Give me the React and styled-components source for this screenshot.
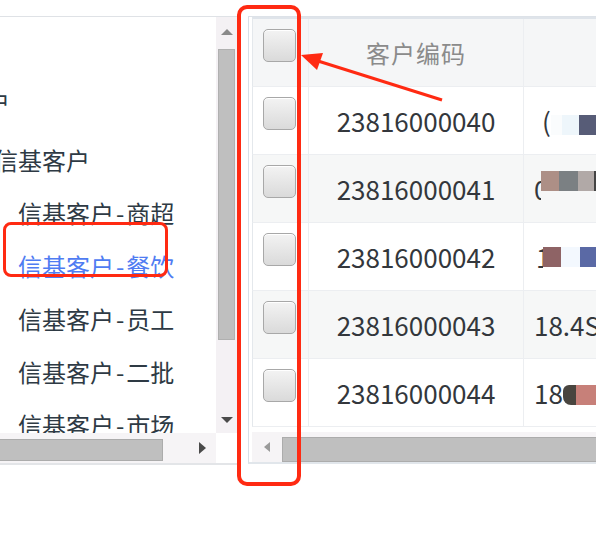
import React from 'react'
import styled, { createGlobalStyle } from 'styled-components'

const GlobalStyle = createGlobalStyle`
  html, body {
    margin: 0;
    background: #fff;
    overflow: hidden;
  }
  body {
    font-family: "Noto Sans CJK SC", "Noto Sans", sans-serif;
  }
`

const tree = [
  { label: '客户', indent: -38, tall: true },
  { label: '信基客户', indent: -6 },
  { label: '信基客户-商超', indent: 18 },
  { label: '信基客户-餐饮', indent: 18, active: true },
  { label: '信基客户-员工', indent: 18 },
  { label: '信基客户-二批', indent: 18 },
  { label: '信基客户-市场', indent: 18 },
]

const rows = [
  { code: '23816000040', text: '(', pad: 8, blocks: [{ w: 11, c: '#fafcfd', dy: 4 }, { w: 17, c: '#eef6fb', dy: 4 }, { w: 19, c: '#575c77', dy: 4 }] },
  { code: '23816000041', text: '0', pad: 0, clip: true, blocks: [{ w: 18, c: '#ad8f86', dy: -8 }, { w: 19, c: '#7b8083', dy: -8 }, { w: 16, c: '#b1a9a7', dy: -8 }, { w: 8, c: '#444', dy: -8 }] },
  { code: '23816000042', text: '1', pad: 2, clip: true, blocks: [{ w: 18, c: '#8e6365', dy: 0 }, { w: 19, c: '#f3f8fe', dy: 0 }, { w: 19, c: '#5a69a5', dy: 0 }] },
  { code: '23816000043', text: '18.4S', pad: 0, blocks: [] },
  { code: '23816000044', text: '18', pad: 0, blocks: [{ w: 13, c: '#49453f', dy: 2, r: true }, { w: 24, c: '#c78079', dy: 2 }] },
]

const Label = ({ text }) => {
  const parts = text.split('-')
  if (parts.length < 2) return text
  return (
    <>
      {parts[0]}<Dash>-</Dash>{parts[1]}
    </>
  )
}

const App = () => {
  return (
    <>
      <GlobalStyle />
      <Stage>
        <TreePanel>
          <TreeBody>
            <TreeList>
              {tree.map((item, i) => (
                <TreeRow key={i} $indent={item.indent} $tall={item.tall} $active={item.active}>
                  <Label text={item.label} />
                </TreeRow>
              ))}
            </TreeList>
            <VScroll>
              <ArrowBox $h={30}><Tri $dir="up" /></ArrowBox>
              <VThumb />
              <Spacer />
              <ArrowBox $h={26}><Tri $dir="down" /></ArrowBox>
            </VScroll>
          </TreeBody>
          <HScrollRow>
            <HTrack>
              <HThumb $w={163} />
              <Spacer />
              <ArrowBox $w={20}><Tri $dir="right" /></ArrowBox>
            </HTrack>
            <Corner />
          </HScrollRow>
        </TreePanel>

        <TablePanel>
          <HeaderRow>
            <CheckCell><CheckBox /></CheckCell>
            <HeadCell>客户编码</HeadCell>
            <Cell />
          </HeaderRow>
          <TableBody>
            {rows.map((row, i) => (
              <BodyRow key={row.code} $alt={i % 2 === 1}>
                <CheckCell><CheckBox /></CheckCell>
                <CodeCell>{row.code}</CodeCell>
                <NameCell $pad={row.pad}>
                  <NameText $clip={row.clip}>{row.text}</NameText>
                  {row.blocks.map((b, j) => (
                    <Mosaic key={j} $w={b.w} $c={b.c} $dy={b.dy} $r={b.r} />
                  ))}
                </NameCell>
              </BodyRow>
            ))}
          </TableBody>
          <HScrollRow>
            <ArrowBox $w={30}><Tri $dir="left" /></ArrowBox>
            <TableThumb />
          </HScrollRow>
        </TablePanel>

        <Mark $x={3} $y={222} $w={165} $h={55} $r={8} $b={3} />
        <Mark $x={237} $y={5} $w={64} $h={481} $r={10} $b={4} />
        <ArrowSvg width="596" height="544" viewBox="0 0 596 544">
          <line x1="442" y1="100" x2="318" y2="61" stroke="#ff2a12" strokeWidth="3" />
          <polygon points="301,55 323,53 317,70" fill="#ff2a12" />
        </ArrowSvg>
      </Stage>
    </>
  )
}

export default App

const Stage = styled.div`
  position: relative;
  width: 596px;
  height: 544px;
  overflow: hidden;
  padding-top: 16px;
  box-sizing: border-box;
  display: flex;
  align-items: flex-start;
`

const TreePanel = styled.div`
  width: 238px;
  flex: none;
  display: flex;
  flex-direction: column;
  border-top: 1px solid #dfe2e6;
  border-bottom: 2px solid #e3e5e8;
`

const TreeBody = styled.div`
  height: 416px;
  display: flex;
`

const TreeList = styled.div`
  flex: 1;
  overflow: hidden;
  padding-top: 53px;
`

const TreeRow = styled.div`
  height: ${p => (p.$tall ? 63 : 53)}px;
  display: flex;
  align-items: center;
  padding-left: ${p => (p.$indent < 0 ? 0 : p.$indent)}px;
  margin-left: ${p => (p.$indent < 0 ? p.$indent : 0)}px;
  white-space: nowrap;
  font-size: 24px;
  color: ${p => (p.$active ? '#4f7cf2' : '#2e3a44')};
`

const Dash = styled.span`
  margin: 0 2px;
`

const VScroll = styled.div`
  width: 22px;
  background: #f4f1f4;
  display: flex;
  flex-direction: column;
`

const ArrowBox = styled.div`
  flex: none;
  ${p => p.$h && `height: ${p.$h}px;`}
  ${p => p.$w && `width: ${p.$w}px;`}
  display: flex;
  align-items: center;
  justify-content: center;
`

const Tri = styled.div`
  width: 0;
  height: 0;
  ${p => p.$dir === 'up' && 'border-left: 6px solid transparent; border-right: 6px solid transparent; border-bottom: 6px solid #8a8a8a;'}
  ${p => p.$dir === 'down' && 'border-left: 6px solid transparent; border-right: 6px solid transparent; border-top: 6px solid #4a4a4a;'}
  ${p => p.$dir === 'right' && 'border-top: 6px solid transparent; border-bottom: 6px solid transparent; border-left: 7px solid #4a4a4a;'}
  ${p => p.$dir === 'left' && 'border-top: 5px solid transparent; border-bottom: 5px solid transparent; border-right: 6px solid #9a9a9a;'}
`

const VThumb = styled.div`
  width: 17px;
  height: 291px;
  margin: 2px 0 0 2px;
  background: #bfbfbf;
  border: 1px solid #b0b0b0;
  box-sizing: border-box;
`

const Spacer = styled.div`
  flex: 1;
`

const HScrollRow = styled.div`
  height: 30px;
  display: flex;
  background: #f6f4f6;
`

const HTrack = styled.div`
  flex: 1;
  display: flex;
  align-items: center;
  padding-right: 4px;
`

const HThumb = styled.div`
  width: ${p => p.$w}px;
  height: 22px;
  margin-top: 4px;
  background: #bfbfbf;
  border: 1px solid #acacac;
  border-left: none;
  box-sizing: border-box;
`

const Corner = styled.div`
  width: 22px;
  background: #fff;
`

const TablePanel = styled.div`
  width: 420px;
  flex: none;
  margin-left: 10px;
  padding-left: 3px;
  display: flex;
  flex-direction: column;
  border-left: 1px solid #d8dfe7;
  border-top: 1px solid #dde2e8;
  border-bottom: 2px solid #e1e6eb;
`

const RowGrid = styled.div`
  display: grid;
  grid-template-columns: 56px 215px 1fr;
  border-left: 1px solid #e4e8ec;
`

const HeaderRow = styled(RowGrid)`
  height: 70px;
  background: #f5f6f7;
  border-top: 2px solid #dfe4ea;
  border-bottom: 1px solid #eceef1;
  box-sizing: border-box;
`

const TableBody = styled.div`
  height: 345px;
  overflow: hidden;
`

const BodyRow = styled(RowGrid)`
  height: 68px;
  box-sizing: border-box;
  background: ${p => (p.$alt ? '#f6f7f7' : '#fff')};
  border-bottom: 1px solid #eceef1;
`

const Cell = styled.div`
  border-right: 1px solid #eceef1;
  display: flex;
  align-items: center;
  overflow: hidden;
`

const CheckCell = styled(Cell)`
  align-items: flex-start;
  padding: 10px 0 0 10px;
`

const CheckBox = styled.div`
  width: 33px;
  height: 33px;
  box-sizing: border-box;
  border: 1px solid #a8a8a8;
  border-radius: 5px;
  background: linear-gradient(#f3f3f3, #dadada);
  box-shadow: inset 0 1px 0 #fff;
`

const HeadCell = styled(Cell)`
  justify-content: center;
  font-size: 24px;
  letter-spacing: 1px;
  color: #8b8b8b;
`

const CodeCell = styled(Cell)`
  justify-content: center;
  font-size: 26px;
  color: #33373c;
`

const NameCell = styled(Cell)`
  padding-left: ${p => 10 + p.$pad}px;
  font-size: 26px;
  color: #33373c;
  white-space: nowrap;
`

const NameText = styled.span`
  ${p => p.$clip && 'width: 7px; overflow: hidden; display: inline-block;'}
`

const Mosaic = styled.span`
  flex: none;
  width: ${p => p.$w}px;
  height: 20px;
  background: ${p => p.$c};
  transform: translateY(${p => p.$dy}px);
  ${p => p.$r && 'border-radius: 6px 0 0 8px;'}
`

const TableThumb = styled.div`
  flex: 1;
  height: 23px;
  margin-top: 5px;
  background: #bfbfbf;
  border: 1px solid #acacac;
  border-right: none;
`

const Mark = styled.div`
  position: absolute;
  left: ${p => p.$x}px;
  top: ${p => p.$y}px;
  width: ${p => p.$w}px;
  height: ${p => p.$h}px;
  box-sizing: border-box;
  border: ${p => p.$b}px solid #ff2a12;
  border-radius: ${p => p.$r}px;
  pointer-events: none;
`

const ArrowSvg = styled.svg`
  position: absolute;
  left: 0;
  top: 0;
  pointer-events: none;
`
